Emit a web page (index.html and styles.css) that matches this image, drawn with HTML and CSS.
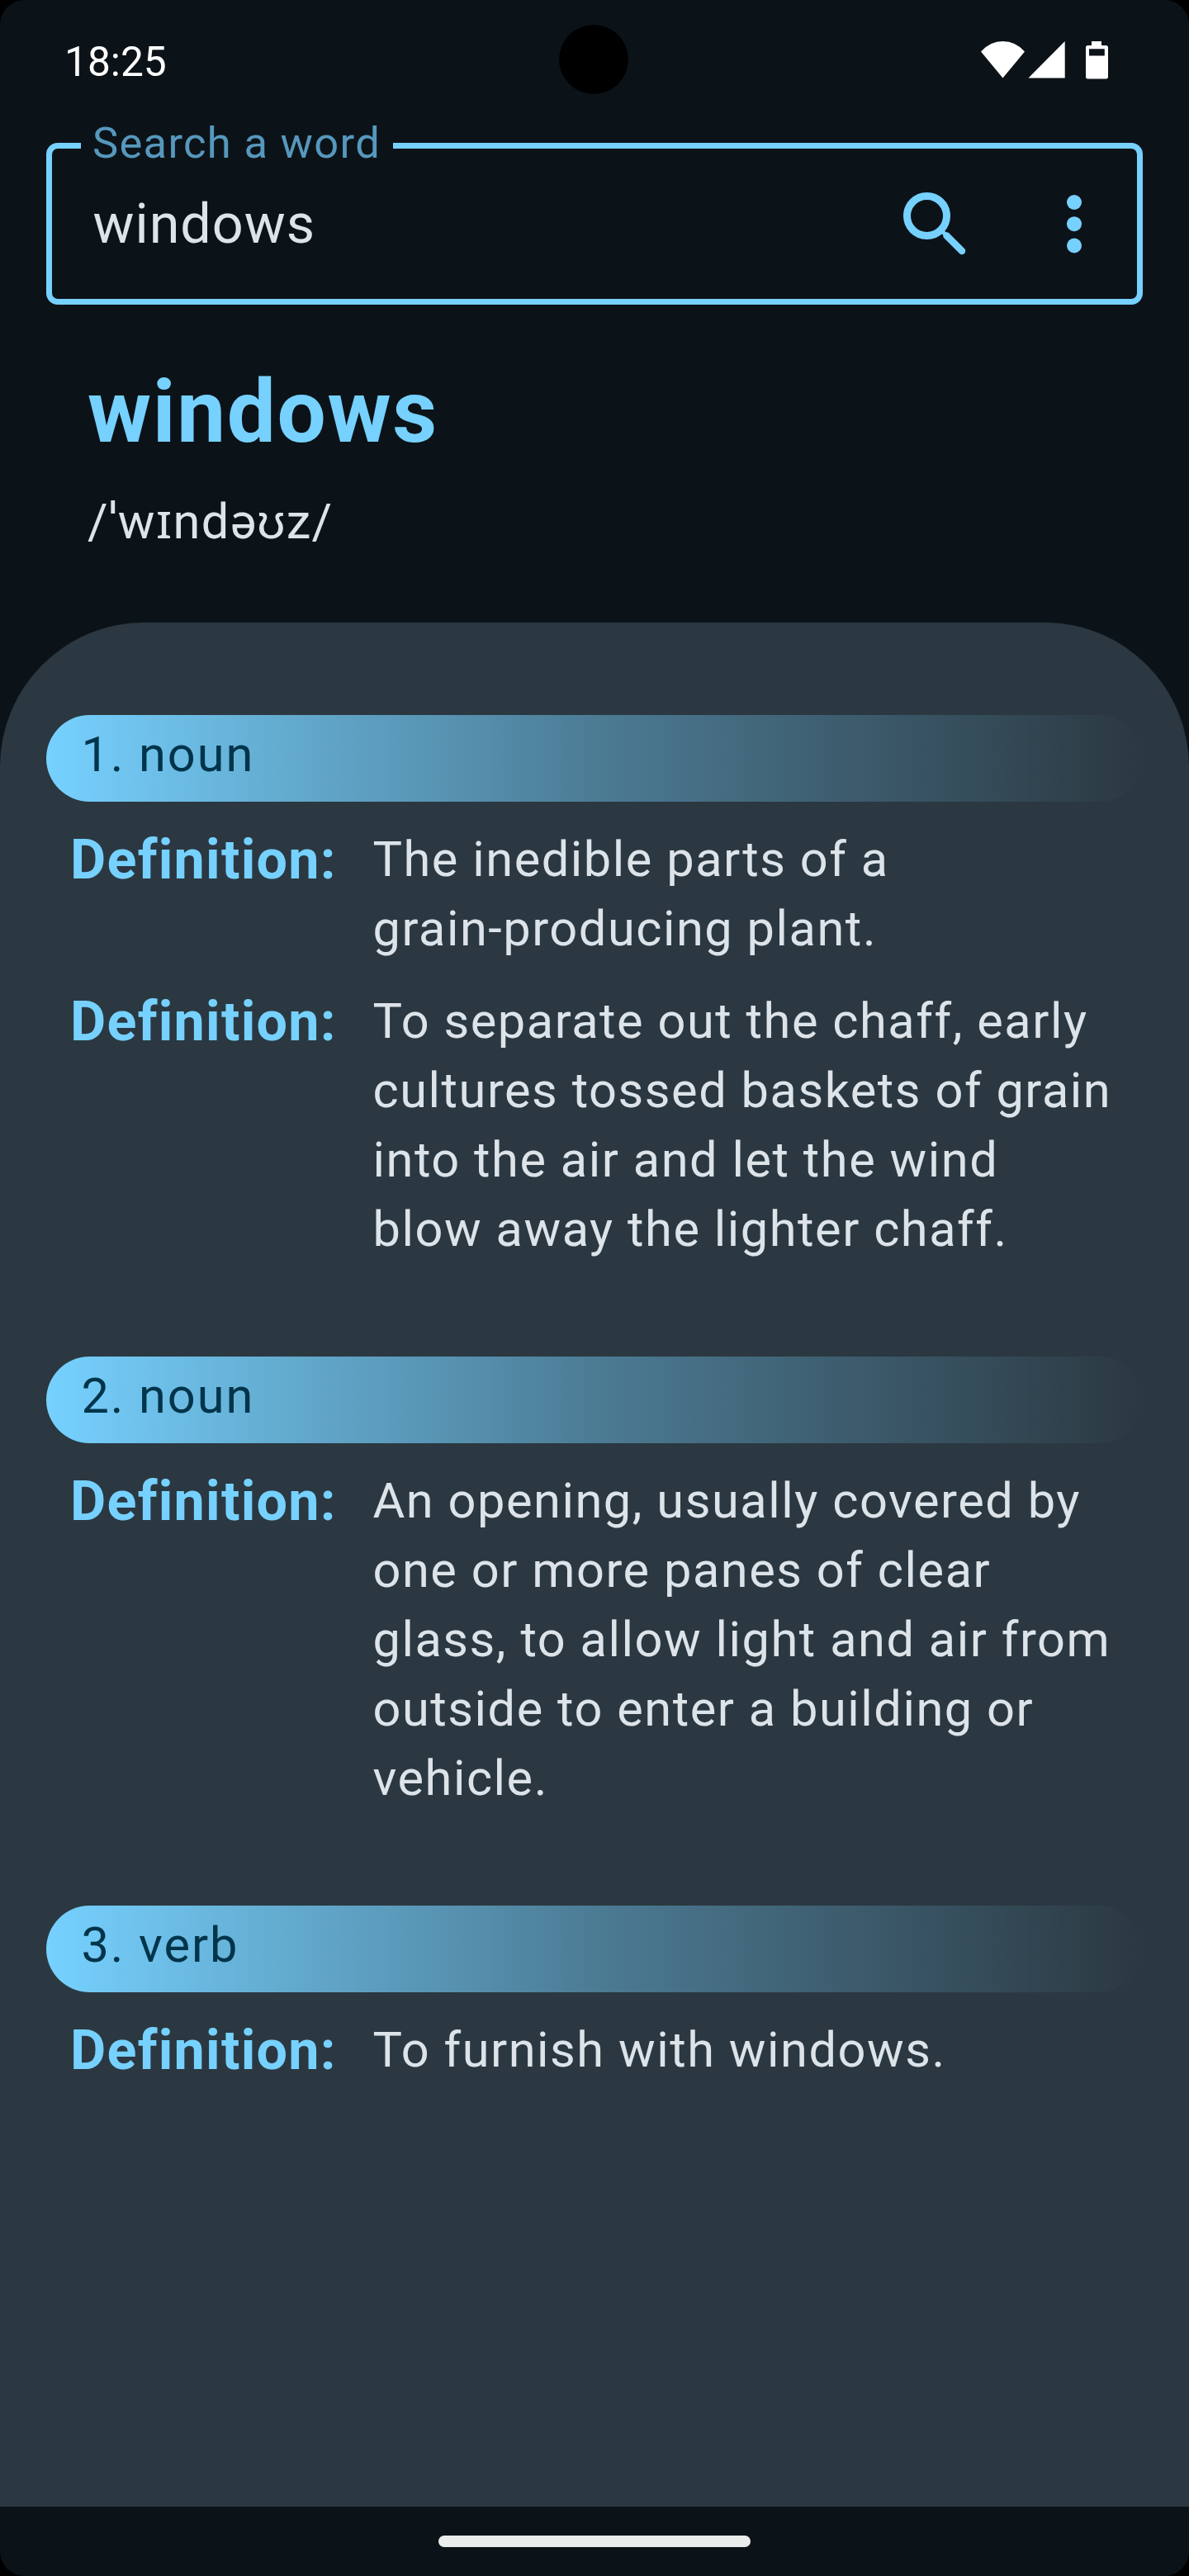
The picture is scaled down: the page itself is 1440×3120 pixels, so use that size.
FILE: index.html
```html
<!DOCTYPE html>
<html lang="en">
<head>
<meta charset="utf-8">
<title>Dictionary</title>
<link rel="stylesheet" href="styles.css">
</head>
<body>
<main class="screen">
  <header class="status">
    <span class="clock">18:25</span>
    <span class="camera"></span>
    <svg class="status-icons" width="154" height="46" viewBox="0 0 154 46" fill="#fff">
      <path d="M0 12.500Q11 0 26.500 0T53 12.500L26.500 44.500Z"/>
      <path d="M101.700 0V44.500H57.500Z"/>
      <path fill-rule="evenodd" d="M134 0h12v5h5.500q2.500 0 2.500 2.500v35.500q0 2.500-2.500 2.500h-22q-2.500 0-2.500-2.500V7.500q0-2.500 2.500-2.500h4.500zM131 9.300v8.200h18.800V9.300z"/>
    </svg>
  </header>
  <section class="search">
    <span class="search-label">Search a word</span>
    <span class="search-value">windows</span>
    <svg class="icon-search" width="76" height="76" viewBox="0 0 76 76" fill="none" stroke="#76d1ff">
      <circle cx="28.500" cy="28.500" r="24" stroke-width="9"/>
      <path d="M48 48L52.500 52.500" stroke-width="5"/>
      <path d="M52.500 52.500L71 71" stroke-width="8.500" stroke-linecap="round"/>
    </svg>
    <svg class="icon-more" width="18" height="71" viewBox="0 0 18 71" fill="#76d1ff">
      <circle cx="9" cy="9" r="9"/><circle cx="9" cy="35.200" r="9"/><circle cx="9" cy="61.500" r="9"/>
    </svg>
  </section>
  <section class="headword">
    <h1 class="word">windows</h1>
    <p class="phonetic">/ˈwɪndə<span class="ipa">ʊ</span>z/</p>
  </section>
  <section class="sheet">
    <article class="meaning">
      <h2 class="part">1. noun</h2>
      <dl class="row"><dt>Definition:</dt><dd>The inedible parts of a<br>grain-producing plant.</dd></dl>
      <dl class="row"><dt>Definition:</dt><dd>To separate out the chaff, early<br>cultures tossed baskets of grain<br>into the air and let the wind<br>blow away the lighter chaff.</dd></dl>
    </article>
    <article class="meaning">
      <h2 class="part">2. noun</h2>
      <dl class="row"><dt>Definition:</dt><dd>An opening, usually covered by<br>one or more panes of clear<br>glass, to allow light and air from<br>outside to enter a building or<br>vehicle.</dd></dl>
    </article>
    <article class="meaning">
      <h2 class="part">3. verb</h2>
      <dl class="row"><dt>Definition:</dt><dd>To furnish with windows.</dd></dl>
    </article>
  </section>
  <footer class="nav"><span class="handle"></span></footer>
</main>
</body>
</html>
```
FILE: styles.css
```css
body { margin: 0; background: #000; font-family: Roboto, "Noto Sans", sans-serif; }
.screen { display: flex; flex-direction: column; height: 3120px; border-radius: 30px; overflow: hidden; background: #0c1318; color: #dce3e9; }
.status { position: relative; display: flex; justify-content: space-between; align-items: flex-start; height: 173px; box-sizing: border-box; padding: 50px 98px 0 78px; }
.clock { font-size: 49.7px; line-height: 50px; color: #fff; }
.camera { position: absolute; left: 677px; top: 30px; width: 84px; height: 84px; border-radius: 50%; background: #000; }
.search { position: relative; display: flex; align-items: center; box-sizing: border-box; height: 196px; margin: 0 56px; padding: 0 67px 0 49.5px; border: 7px solid #76d1ff; border-radius: 14px; }
.search-label { position: absolute; left: 35px; top: -40px; width: 378px; box-sizing: border-box; padding-left: 14px; line-height: 66px; font-size: 52.5px; letter-spacing: 1.3px; white-space: nowrap; color: #5698bd; background: #0c1318; }
.search-value { flex: 1; font-size: 66.5px; letter-spacing: 1px; }
.icon-search { margin-right: 122px; }
.headword { height: 385px; box-sizing: border-box; padding: 61px 106px 0; }
.word { margin: 0; font-size: 105px; line-height: 140px; font-weight: 700; color: #76d1ff; letter-spacing: 1.68px; }
.phonetic { margin: 20px 0 0; font-size: 59.5px; line-height: 84px; letter-spacing: 1.4px; }
.ipa { font-family: "Liberation Sans", sans-serif; line-height: 1; }
.sheet { flex: 1; padding: 112px 56px 0; border-radius: 175px 175px 0 0; background: #2b3841; }
.meaning { margin-bottom: 112px; }
.part { margin: 0 0 28px; height: 105px; box-sizing: border-box; padding-left: 42.5px; border-radius: 53px; font-size: 59.5px; line-height: 96px; font-weight: 400; letter-spacing: 1.9px; color: #00344a; background: linear-gradient(90deg, #76d1ff, rgba(118,209,255,.76) 20.6%, rgba(118,209,255,.57) 38.7%, rgba(118,209,255,.44) 50%, rgba(118,209,255,.19) 78.6%, rgba(118,209,255,0)); }
.row { display: flex; margin: 0 0 28px 29px; }
.row dt { width: 366.5px; font-size: 66.5px; line-height: 84px; font-weight: 700; letter-spacing: 1.25px; color: #76d1ff; }
.row dd { margin: 0; font-size: 59.5px; line-height: 84px; letter-spacing: 1.54px; white-space: nowrap; }
.nav { display: flex; justify-content: center; height: 84px; box-sizing: border-box; padding-top: 35px; }
.handle { width: 378px; height: 14px; border-radius: 7px; background: #ebecec; }
```
